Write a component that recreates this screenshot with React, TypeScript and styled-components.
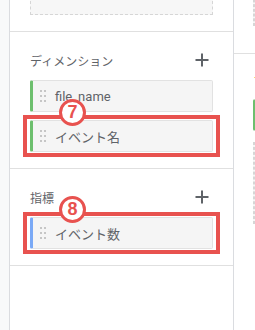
import { FC } from "react";
import styled, { createGlobalStyle } from "styled-components";

const GlobalStyle = createGlobalStyle`
  html, body {
    margin: 0;
    padding: 0;
    background: #fff;
  }
  body {
    font-family: Roboto, "Noto Sans CJK JP", sans-serif;
  }
`;

type Accent = "green" | "blue";

const accentColor: Record<Accent, string> = {
  green: "#6dbf6e",
  blue: "#7aa9f6",
};

const Page = styled.div`
  display: flex;
  width: 255px;
  height: 330px;
  overflow: hidden;
`;

const Rail = styled.div`
  width: 9px;
  flex: none;
  background: #f8f9fa;
  border-right: 1px solid #dadce0;
`;

const Panel = styled.div`
  width: 223px;
  flex: none;
  border-right: 1px solid #dadce0;
  display: flex;
  flex-direction: column;
`;

const Section = styled.div<{ $top?: boolean }>`
  padding: ${({ $top }) => ($top ? "0 20px" : "18px 20px 16px")};
  height: ${({ $top }) => ($top ? "31px" : "auto")};
  border-bottom: 1px solid #e0e0e0;
  display: flex;
  flex-direction: column;
  gap: 8px;
`;

const DropZone = styled.div<{ $bottom: number }>`
  height: ${({ $bottom }) => $bottom}px;
  margin-top: -10px;
  border: 1px dashed #d6d6d6;
  border-top: none;
  background: #f7f7f7;
  flex: none;
`;

const Header = styled.div`
  display: flex;
  align-items: center;
  justify-content: space-between;
  height: 20px;
  margin-bottom: 2px;
  font-size: 12px;
  color: #5f6368;
`;

const PlusIcon: FC = () => (
  <svg width="16" height="16" viewBox="0 0 16 16" style={{ marginRight: 3 }}>
    <path d="M8 1.5v13M1.5 8h13" stroke="#5f6368" strokeWidth="2" />
  </svg>
);

const Chip = styled.div<{ $accent: Accent }>`
  position: relative;
  height: 32px;
  box-sizing: border-box;
  display: flex;
  align-items: center;
  gap: 9px;
  padding-left: 7px;
  background: #f5f5f5;
  border: 1px solid #e2e2e2;
  border-left: 3px solid ${({ $accent }) => accentColor[$accent]};
  border-radius: 2px;
  font-size: 13px;
  color: #5f6368;
`;

const Handle = styled.div`
  display: grid;
  grid-template-columns: 2px 2px;
  grid-auto-rows: 2px;
  column-gap: 2px;
  row-gap: 3px;
  & span {
    background: #c6c6c6;
  }
`;

const Highlight = styled.div`
  position: absolute;
  inset: -6px -8px -6px -10px;
  border: 4px solid #e8524f;
  pointer-events: none;
`;

const Badge = styled.div`
  position: absolute;
  left: 32px;
  top: -20px;
  width: 27px;
  height: 27px;
  box-sizing: border-box;
  border: 3px solid #e8524f;
  border-radius: 50%;
  background: #fff;
  color: #e8524f;
  font-family: "Liberation Sans", Arial, sans-serif;
  font-weight: 700;
  font-size: 18px;
  line-height: 21px;
  text-align: center;
`;

const Side = styled.div`
  flex: 1;
  display: flex;
  flex-direction: column;
  overflow: hidden;
`;

const SideTop = styled.div`
  height: 53px;
  border-bottom: 1px solid #e0e0e0;
  padding-left: 19px;
`;

const SideBody = styled.div`
  padding: 18px 0 0 19px;
  display: flex;
  flex-direction: column;
  gap: 11px;
`;

const OrangeLabel = styled.div`
  font-size: 12px;
  color: #e8892b;
  height: 16px;
  white-space: nowrap;
`;

const SideDrop = styled.div`
  height: 80px;
  border: 1px dashed #d6d6d6;
  background: #f7f7f7;
`;

const DragHandle: FC = () => (
  <Handle>
    {Array.from({ length: 6 }).map((_, i) => (
      <span key={i} />
    ))}
  </Handle>
);

type Item = { label: string; accent: Accent; mark?: number };

const dimensions: Item[] = [
  { label: "file_name", accent: "green" },
  { label: "イベント名", accent: "green", mark: 7 },
];

const metrics: Item[] = [{ label: "イベント数", accent: "blue", mark: 8 }];

const Field: FC<{ item: Item }> = ({ item }) => (
  <Chip $accent={item.accent}>
    <DragHandle />
    <span>{item.label}</span>
    {item.mark && (
      <Highlight>
        <Badge>{item.mark}</Badge>
      </Highlight>
    )}
  </Chip>
);

export default function App() {
  return (
    <>
      <GlobalStyle />
      <Page>
        <Rail />
        <Panel>
          <Section $top>
            <DropZone $bottom={24} />
          </Section>
          <Section>
            <Header>
              <span>ディメンション</span>
              <PlusIcon />
            </Header>
            {dimensions.map((d) => (
              <Field key={d.label} item={d} />
            ))}
          </Section>
          <Section>
            <Header>
              <span>指標</span>
              <PlusIcon />
            </Header>
            {metrics.map((m) => (
              <Field key={m.label} item={m} />
            ))}
          </Section>
        </Panel>
        <Side>
          <SideTop>
            <DropZone $bottom={35} />
          </SideTop>
          <SideBody>
            <OrangeLabel>フィルタ</OrangeLabel>
            <Chip $accent="green">
              <DragHandle />
            </Chip>
            <SideDrop />
          </SideBody>
        </Side>
      </Page>
    </>
  );
}
